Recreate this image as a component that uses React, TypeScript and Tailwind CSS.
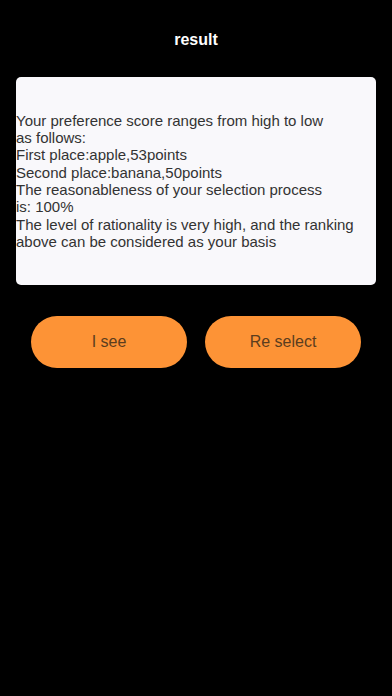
export default function App() {
  const lines = [
    "Your preference score ranges from high to low",
    "as follows:",
    "First place:apple,53points",
    "Second place:banana,50points",
    "The reasonableness of your selection process",
    "is: 100%",
    "The level of rationality is very high, and the ranking",
    "above can be considered as your basis",
  ];

  return (
    <div
      className="min-h-[696px] w-full bg-black flex flex-col items-center"
      style={{ fontFamily: '"Liberation Sans", Arial, sans-serif' }}
    >
      <div className="h-[80px] w-full flex items-center justify-center pt-0">
        <h1 className="text-white text-[16px] font-semibold -mt-[0px]">result</h1>
      </div>
      <div className="w-[360px] h-[208px] -mt-[3px] rounded-[5px] bg-[#f9f8fb] flex flex-col justify-center">
        {lines.map((l) => (
          <p key={l} className="text-[15px] leading-[17.3px] text-[#333333] whitespace-nowrap">
            {l}
          </p>
        ))}
      </div>
      <div className="mt-[31px] flex gap-[18px]">
        <button className="w-[156px] h-[52px] rounded-full bg-[#fd9336] text-[#5b3d1e] text-[16px]">
          I see
        </button>
        <button className="w-[156px] h-[52px] rounded-full bg-[#fd9336] text-[#5b3d1e] text-[16px]">
          Re select
        </button>
      </div>
    </div>
  );
}
